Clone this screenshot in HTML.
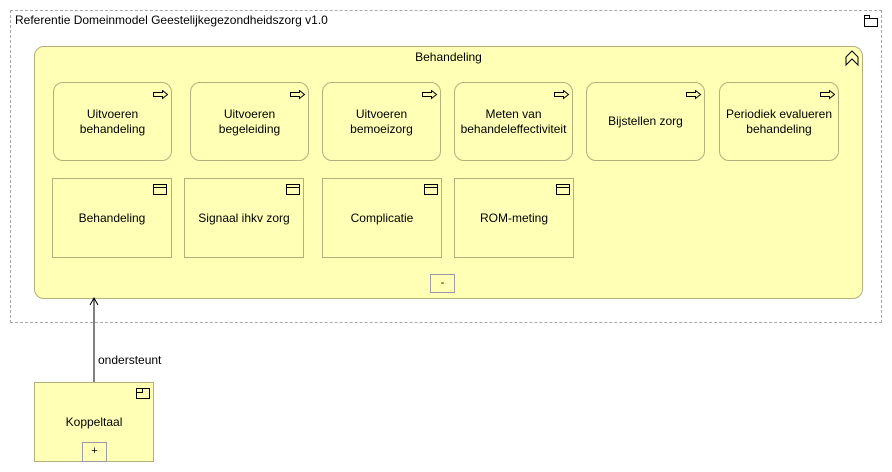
<!DOCTYPE html>
<html><head><style>
body{margin:0;width:892px;height:472px;background:#fff;position:relative;font-family:"Liberation Sans",sans-serif;font-size:12px;color:#000;overflow:hidden}
.a{position:absolute;box-sizing:border-box}
.y{background:#ffffb5;border:1px solid #b3b07a}
.r{border-radius:10px}
.t{display:flex;align-items:center;justify-content:center;text-align:center;line-height:15px}
.btn{position:absolute;box-sizing:border-box;border:1px solid #9a9aa8;background:#ffffb5;text-align:center;font-size:11px;line-height:16px}
svg{position:absolute}
</style></head><body>
<div class="a" style="left:10px;top:10px;width:872px;height:313px;border:1px dashed #a8a8a8"></div>
<div class="a" style="left:15px;top:13px;font-size:12px">Referentie Domeinmodel Geestelijkegezondheidszorg v1.0</div>
<svg style="left:864px;top:15px" width="14" height="12"><path d="M0.5 3.5h13v8h-13z M0.5 3.5v-3h5v3" fill="none" stroke="#000"/></svg>

<div class="a y" style="left:34px;top:46px;width:829px;height:253px;border-radius:10px"></div>
<div class="a" style="left:34px;top:50px;width:829px;text-align:center">Behandeling</div>
<svg style="left:845px;top:50px" width="14" height="16"><path d="M1 15V7l6-6 6 6v8l-6-6z M1 7" fill="none" stroke="#000"/></svg>

<div class="a y r t" style="left:53px;top:82px;width:119px;height:79px">Uitvoeren<br>behandeling</div>
<div class="a y r t" style="left:190px;top:82px;width:119px;height:79px">Uitvoeren<br>begeleiding</div>
<div class="a y r t" style="left:322px;top:82px;width:119px;height:79px">Uitvoeren<br>bemoeizorg</div>
<div class="a y r t" style="left:454px;top:82px;width:119px;height:79px">Meten van<br>behandeleffectiviteit</div>
<div class="a y r t" style="left:586px;top:82px;width:119px;height:79px">Bijstellen zorg</div>
<div class="a y r t" style="left:719px;top:82px;width:120px;height:79px">Periodiek evalueren<br>behandeling</div>

<svg style="left:153px;top:90px" width="16" height="10"><path d="M0.5 2.5h9v-2l5 4-5 4v-2h-9z" fill="none" stroke="#000"/></svg>
<svg style="left:290px;top:90px" width="16" height="10"><path d="M0.5 2.5h9v-2l5 4-5 4v-2h-9z" fill="none" stroke="#000"/></svg>
<svg style="left:422px;top:90px" width="16" height="10"><path d="M0.5 2.5h9v-2l5 4-5 4v-2h-9z" fill="none" stroke="#000"/></svg>
<svg style="left:554px;top:90px" width="16" height="10"><path d="M0.5 2.5h9v-2l5 4-5 4v-2h-9z" fill="none" stroke="#000"/></svg>
<svg style="left:686px;top:90px" width="16" height="10"><path d="M0.5 2.5h9v-2l5 4-5 4v-2h-9z" fill="none" stroke="#000"/></svg>
<svg style="left:820px;top:90px" width="16" height="10"><path d="M0.5 2.5h9v-2l5 4-5 4v-2h-9z" fill="none" stroke="#000"/></svg>

<div class="a y t" style="left:52px;top:178px;width:120px;height:80px">Behandeling</div>
<div class="a y t" style="left:184px;top:178px;width:120px;height:80px">Signaal ihkv zorg</div>
<div class="a y t" style="left:322px;top:178px;width:120px;height:80px">Complicatie</div>
<div class="a y t" style="left:454px;top:178px;width:120px;height:80px">ROM-meting</div>
<svg style="left:153px;top:184px" width="14" height="11"><path d="M0.5 0.5h13v10h-13z M0.5 3.5h13" fill="none" stroke="#000"/></svg>
<svg style="left:286px;top:184px" width="14" height="11"><path d="M0.5 0.5h13v10h-13z M0.5 3.5h13" fill="none" stroke="#000"/></svg>
<svg style="left:424px;top:184px" width="14" height="11"><path d="M0.5 0.5h13v10h-13z M0.5 3.5h13" fill="none" stroke="#000"/></svg>
<svg style="left:556px;top:184px" width="14" height="11"><path d="M0.5 0.5h13v10h-13z M0.5 3.5h13" fill="none" stroke="#000"/></svg>

<div class="btn" style="left:430px;top:274px;width:25px;height:19px">-</div>

<svg style="left:88px;top:297px" width="12" height="86"><path d="M6 1V86 M2 8l4-7 4 7" fill="none" stroke="#000"/></svg>
<div class="a" style="left:98px;top:353px">ondersteunt</div>

<div class="a y t" style="left:34px;top:382px;width:120px;height:80px">Koppeltaal</div>
<svg style="left:136px;top:388px" width="14" height="12"><path d="M0.5 0.5h13v10h-13z M0.5 4.5h6v-4" fill="none" stroke="#000"/></svg>
<div class="btn" style="left:82px;top:442px;width:25px;height:20px">+</div>
</body></html>
